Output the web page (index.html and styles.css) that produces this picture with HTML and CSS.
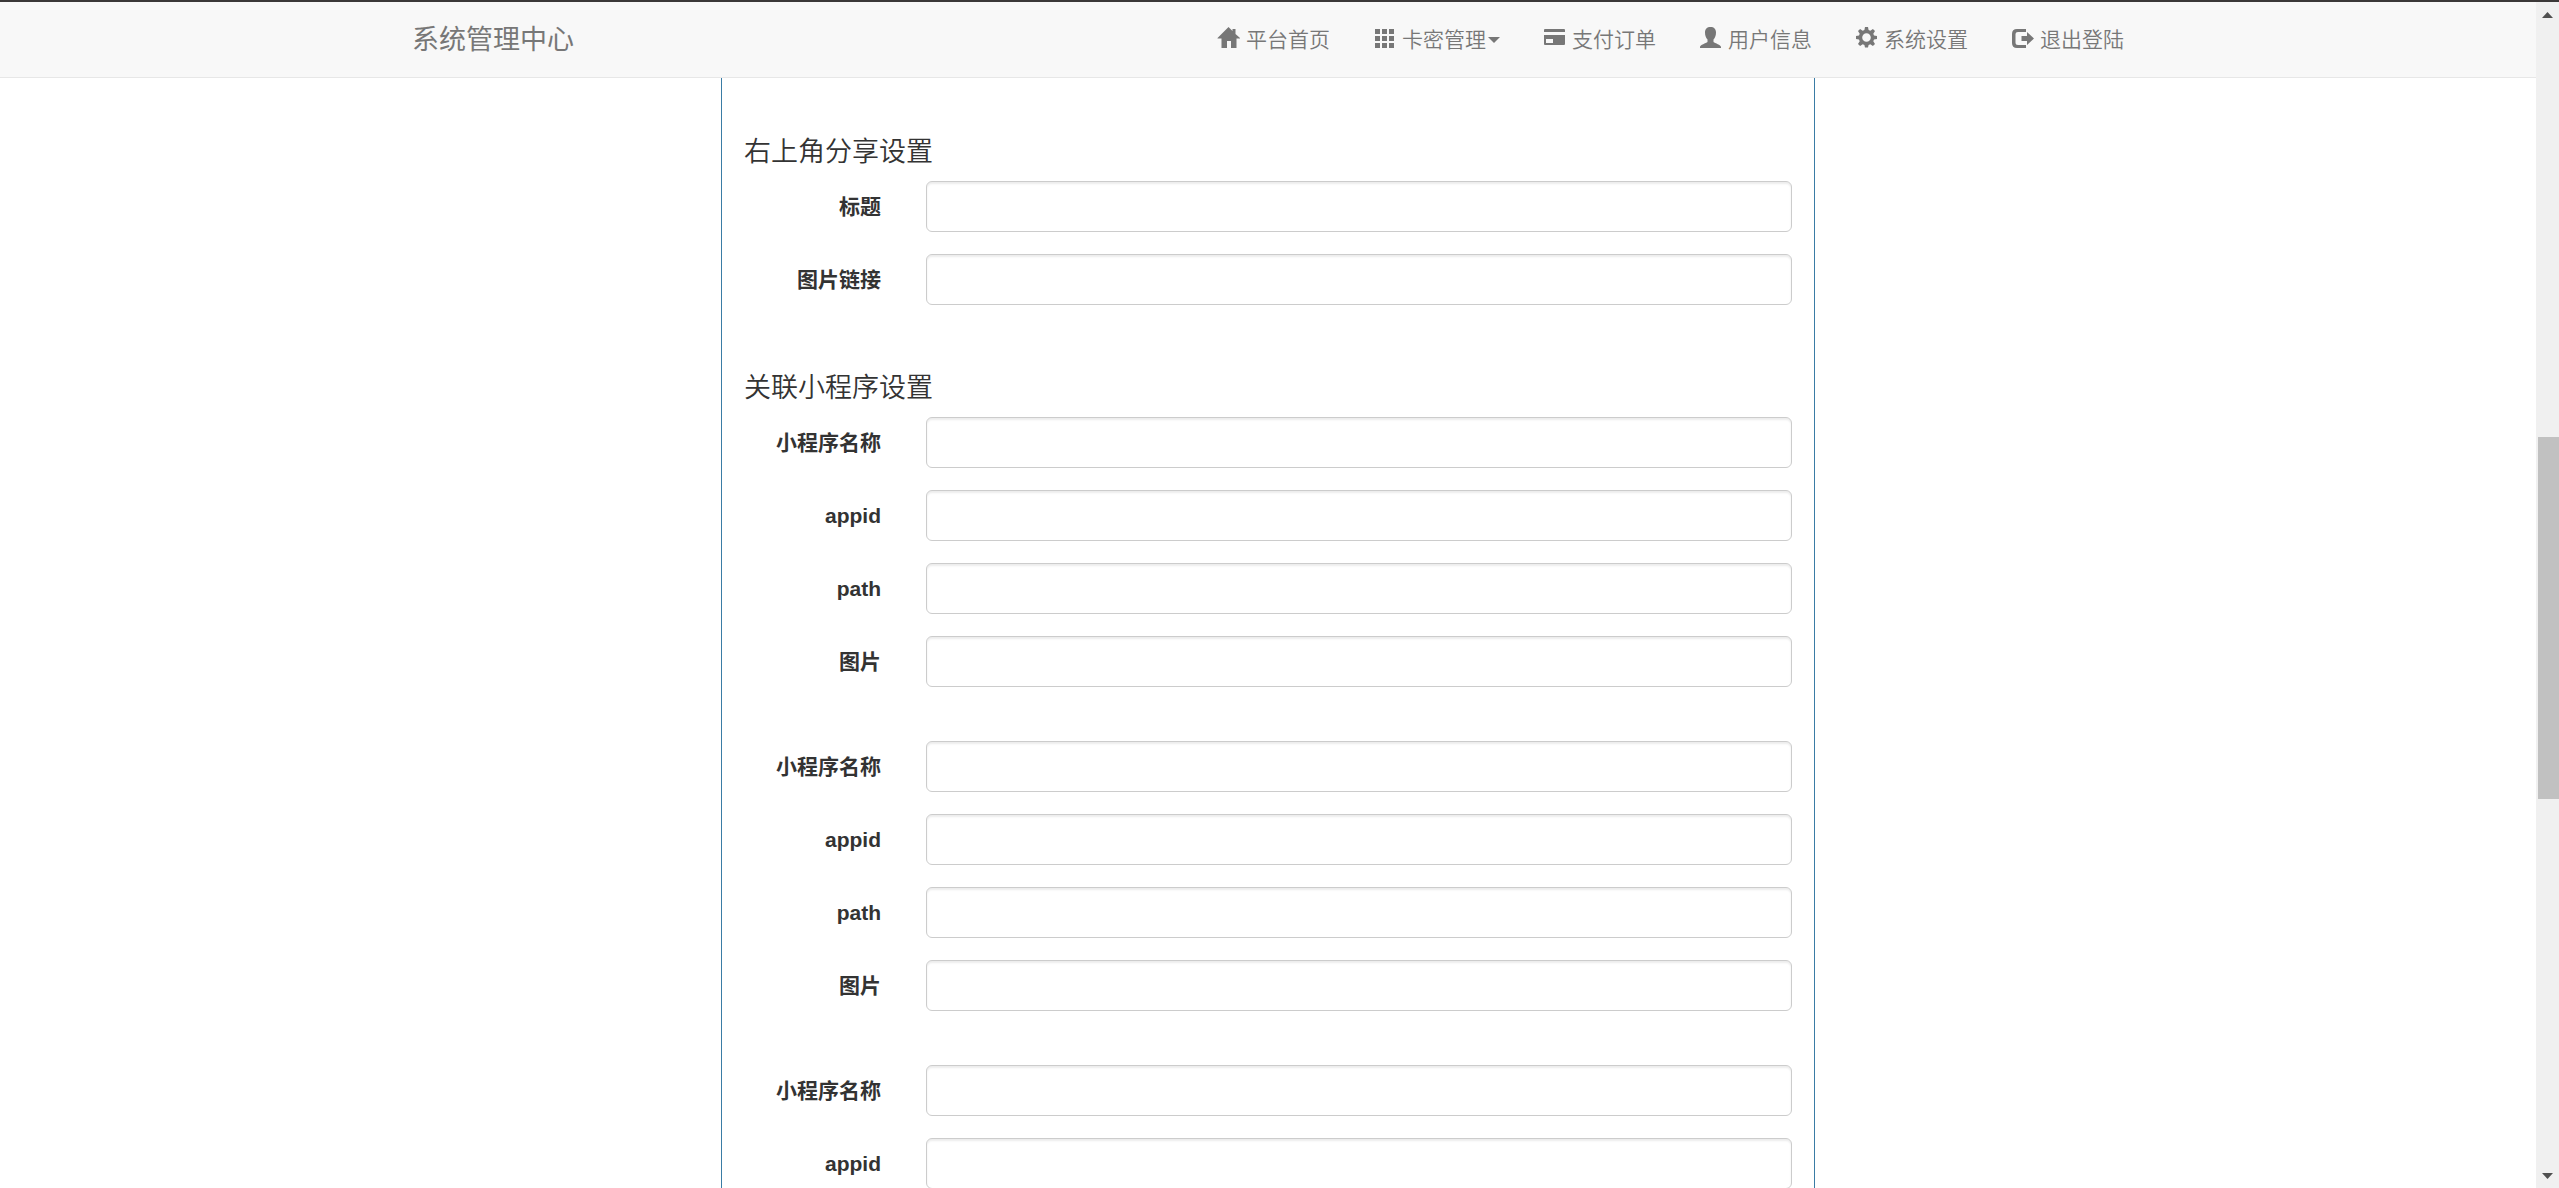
FILE: index.html
```html
<!DOCTYPE html>
<html lang="zh-CN">
<head>
    <meta charset="UTF-8">
    <title>系统管理中心</title>
    <link rel="stylesheet" href="styles.css">
</head>
<body>
    <div class="page">
        <nav class="navbar">
            <div class="container">
                <a class="navbar-brand" href="#">系统管理中心</a>
                <ul class="navbar-nav">
                    <li><a href="#"><svg class="icon" viewBox="0 0 21 21"><path d="M10.500 0L14.500 4V2h3V7L22 11v.5H18.500V21H13v-7H9v7H3.500v-9.500H-.500V11z"/></svg>平台首页</a></li>
                    <li><a href="#"><svg class="icon" viewBox="0 0 21 21"><path d="M1 2h5v5H1zM8 2h5v5H8zM15 2h5v5h-5zM1 9h5v5H1zM8 9h5v5H8zM15 9h5v5h-5zM1 16h5v5H1zM8 16h5v5H8zM15 16h5v5h-5z"/></svg>卡密管理<span class="caret"></span></a></li>
                    <li><a href="#"><svg class="icon" viewBox="0 0 21 21"><path fill-rule="evenodd" d="M1 2h19q1 0 1 1v2H0V3q0-1 1-1zM0 8h21v9q0 1-1 1H1q-1 0-1-1zM2 12v4h7v-4z"/></svg>支付订单</a></li>
                    <li><a href="#"><svg class="icon" viewBox="0 0 21 21"><path d="M10.500 0C14 0 16 2 16 5.500c0 3-1 5.500-2.500 7V15c1.500 1.500 7.500 2.500 7.500 5v1H0v-1c0-2.500 6-3.500 7.500-5v-2.500C6 11 5 8.500 5 5.500 5 2 7 0 10.500 0z"/></svg>用户信息</a></li>
                    <li><a href="#"><svg class="icon" viewBox="0 0 21 21"><path fill-rule="evenodd" d="M9 0h3l.6 3 1.700.7L16.900 2 19 4.100l-1.700 2.600.7 1.700 3 .6v3l-3 .6-.7 1.700 1.700 2.600-2.100 2.100-2.600-1.700-1.700.7L12 20.500H9L8.400 18l-1.700-.7L4.100 19 2 16.900l1.700-2.600-.7-1.700-3-.6V9l3-.6.7-1.700L2 4.100 4.100 2l2.600 1.700L8.400 3zM10.500 6.200a4.300 4.300 0 1 0 0 8.600 4.300 4.300 0 1 0 0-8.600z"/></svg>系统设置</a></li>
                    <li><a href="#"><svg class="icon" viewBox="0 0 21 21"><path d="M14 2v3H6Q3.500 5 3.500 7v8.500Q3.500 18 6 18h8v3H5q-5 0-5-5V7q0-5 5-5z"/><path d="M15 5l7 6.500-7 6.500v-4H9.500V9H15z"/></svg>退出登陆</a></li>
                </ul>
            </div>
        </nav>

        <form class="panel">
            <section class="form-section">
                <h4>右上角分享设置</h4>
                <div class="form-group">
                    <label for="shareTitle">标题</label>
                    <div class="field"><input type="text" id="shareTitle"></div>
                </div>
                <div class="form-group">
                    <label for="shareImage">图片链接</label>
                    <div class="field"><input type="text" id="shareImage"></div>
                </div>
            </section>

            <section class="form-section">
                <h4>关联小程序设置</h4>
                <div class="app-group">
                    <div class="form-group">
                        <label for="name1">小程序名称</label>
                        <div class="field"><input type="text" id="name1"></div>
                    </div>
                    <div class="form-group">
                        <label for="appid1">appid</label>
                        <div class="field"><input type="text" id="appid1"></div>
                    </div>
                    <div class="form-group">
                        <label for="path1">path</label>
                        <div class="field"><input type="text" id="path1"></div>
                    </div>
                    <div class="form-group">
                        <label for="image1">图片</label>
                        <div class="field"><input type="text" id="image1"></div>
                    </div>
                </div>
                <div class="app-group">
                    <div class="form-group">
                        <label for="name2">小程序名称</label>
                        <div class="field"><input type="text" id="name2"></div>
                    </div>
                    <div class="form-group">
                        <label for="appid2">appid</label>
                        <div class="field"><input type="text" id="appid2"></div>
                    </div>
                    <div class="form-group">
                        <label for="path2">path</label>
                        <div class="field"><input type="text" id="path2"></div>
                    </div>
                    <div class="form-group">
                        <label for="image2">图片</label>
                        <div class="field"><input type="text" id="image2"></div>
                    </div>
                </div>
                <div class="app-group">
                    <div class="form-group">
                        <label for="name3">小程序名称</label>
                        <div class="field"><input type="text" id="name3"></div>
                    </div>
                    <div class="form-group">
                        <label for="appid3">appid</label>
                        <div class="field"><input type="text" id="appid3"></div>
                    </div>
                </div>
            </section>
        </form>
    </div>

    <div class="scrollbar" aria-hidden="true">
        <svg class="arrow" viewBox="0 0 11 6"><path d="M5.500 0L11 6H0z"/></svg>
        <div class="track">
            <div class="space-above"></div>
            <div class="thumb"></div>
            <div class="space-below"></div>
        </div>
        <svg class="arrow" viewBox="0 0 11 6"><path d="M0 0h11L5.500 6z"/></svg>
    </div>
</body>
</html>
```
FILE: styles.css
```css
* {
    box-sizing: border-box;
}
body {
    margin: 0;
    height: 100vh;
    display: flex;
    overflow: hidden;
    border-top: 2px solid #3b3838;
    background-color: #fff;
    color: #333;
    font-family: "Liberation Sans", "Noto Sans CJK SC", sans-serif;
    font-size: 21px;
    line-height: 30px;
}
.page {
    flex: 1;
    min-width: 0;
    display: flex;
    flex-direction: column;
    overflow: hidden;
}

/* navbar */
.navbar {
    flex: none;
    background-color: #f8f8f8;
    border-bottom: 1px solid #e7e7e7;
}
.container {
    max-width: 1756px;
    margin: 0 auto;
    display: flex;
    justify-content: space-between;
    align-items: center;
}
.navbar a {
    color: #777;
    text-decoration: none;
}
.navbar-brand {
    padding: 22px;
    font-size: 27px;
}
.navbar-nav {
    display: flex;
    margin: 0;
    padding: 0;
    list-style: none;
    font-weight: 350;
}
.navbar-nav a {
    display: flex;
    align-items: center;
    padding: 22px;
    line-height: 31px;
}
.icon {
    width: 21px;
    height: 21px;
    margin: 0 7px 4px 0;
    fill: currentColor;
    overflow: visible;
}
.caret {
    margin-left: 2px;
    border-top: 6px solid;
    border-left: 6px solid transparent;
    border-right: 6px solid transparent;
}

/* settings form */
.panel {
    flex: 1 0 auto;
    width: 100%;
    max-width: 1094px;
    margin: 0 auto;
    padding: 13px 22px 0;
    border: solid #3a7ca5;
    border-width: 0 1px;
}
.form-section {
    padding-top: 46px;
}
h4 {
    margin: 0 0 14px;
    font-size: 27px;
    font-weight: 350;
    line-height: 30px;
}
.form-group {
    display: flex;
    margin: 0 -22px 22px;
}
.app-group {
    margin-bottom: 54px;
}
label {
    width: 16.6667%;
    padding: 11px 23px 0 22px;
    text-align: right;
    font-weight: bold;
}
.field {
    flex: 1;
    padding: 0 22px;
}
input {
    display: block;
    width: 100%;
    height: 51px;
    padding: 9px 18px;
    border: 1px solid #ccc;
    border-radius: 6px;
    background-color: #fff;
    color: #555;
    font: inherit;
    box-shadow: inset 0 2px 2px rgba(0, 0, 0, .075);
}

/* scrollbar */
.scrollbar {
    flex: none;
    width: 23px;
    display: flex;
    flex-direction: column;
    align-items: center;
    padding: 10px 0 9px;
    background-color: #f0f0f0;
}
.arrow {
    width: 11px;
    height: 6px;
    fill: #505050;
}
.track {
    flex: 1;
    align-self: stretch;
    display: flex;
    flex-direction: column;
    margin: 9px 0 9px 2px;
}
.space-above {
    flex: 410;
}
.thumb {
    flex: 361;
    background-color: #c1c1c1;
}
.space-below {
    flex: 365;
}
```
